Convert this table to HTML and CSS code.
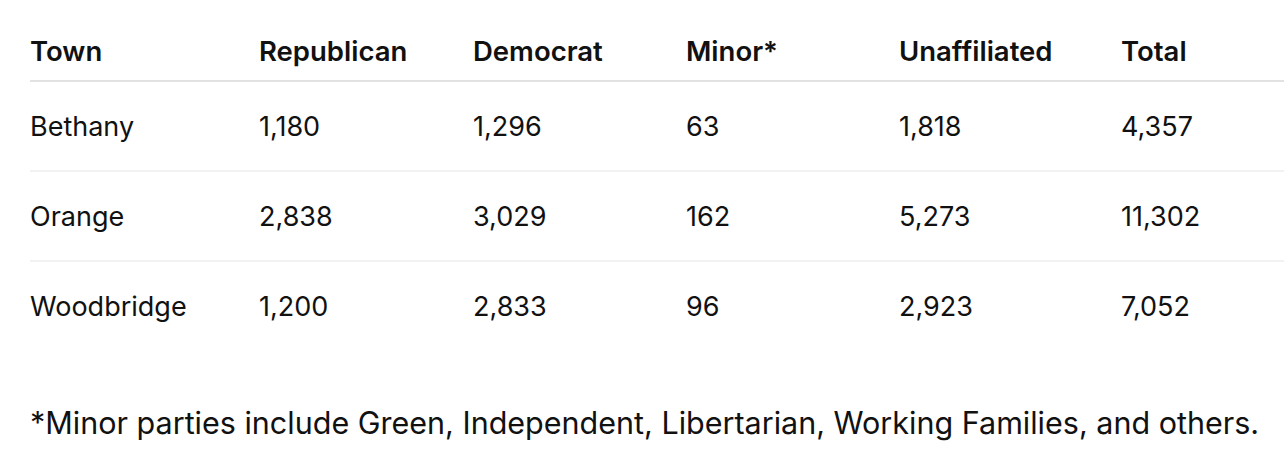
FILE: index.html
```html
<!DOCTYPE html>
<html>
<head>
<meta charset="utf-8">
<link rel="stylesheet" href="styles.css">
</head>
<body>
<div class="page">
  <table class="reg">
    <colgroup>
      <col class="c1"><col class="c2"><col class="c3"><col class="c4"><col class="c5"><col class="c6">
    </colgroup>
    <thead>
      <tr><th>Town</th><th>Republican</th><th>Democrat</th><th>Minor*</th><th>Unaffiliated</th><th>Total</th></tr>
    </thead>
    <tbody>
      <tr><td>Bethany</td><td>1,180</td><td>1,296</td><td>63</td><td>1,818</td><td>4,357</td></tr>
      <tr><td>Orange</td><td>2,838</td><td>3,029</td><td>162</td><td>5,273</td><td>11,302</td></tr>
      <tr><td>Woodbridge</td><td>1,200</td><td>2,833</td><td>96</td><td>2,923</td><td>7,052</td></tr>
    </tbody>
  </table>
  <p class="note">*Minor parties include Green, Independent, Libertarian, Working Families, and others.</p>
</div>
</body>
</html>
```
FILE: styles.css
```css
html, body { margin: 0; padding: 0; background: #fff; }
body { font-family: Inter, "Noto Sans", sans-serif; color: #111; overflow: hidden; }
.page { padding-left: 30px; width: 1300px; }
.reg { border-collapse: collapse; table-layout: fixed; width: 1270px; }
.c1 { width: 229px; } .c2 { width: 214px; } .c3 { width: 213px; } .c4 { width: 213px; } .c5 { width: 222px; } .c6 { width: 179px; }
.reg th, .reg td { text-align: left; padding: 0; font-size: 27px; vertical-align: middle; }
.reg th { font-weight: 600; font-size: 27.5px; height: 81px; padding-top: 22px; box-sizing: border-box; border-bottom: 2px solid #e2e2e2; }
.reg td { height: 88px; border-bottom: 2px solid #f2f2f2; }
.reg tbody tr:last-child td { border-bottom: none; }
.note { margin: 55px 0 0; font-size: 30.5px; line-height: 36px; }
```
